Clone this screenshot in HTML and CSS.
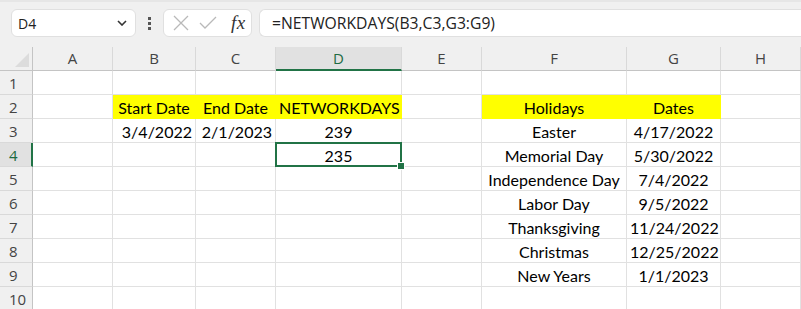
FILE: index.html
```html
<!DOCTYPE html>
<html lang="en">
<head>
    <meta charset="UTF-8">
    <title>NETWORKDAYS - Sheet1</title>
    <link rel="stylesheet" href="styles.css">
</head>
<body>
    <!-- Formula Bar -->
    <div class="toolbar">
        <div class="name-box">
            <span>D4</span>
            <svg class="chevron" width="10" height="6" viewBox="0 0 10 6"><path d="M1 1 L5 5 L9 1" fill="none" stroke="#333" stroke-width="1.6"/></svg>
        </div>
        <div class="dots"><i></i><i></i><i></i></div>
        <div class="fx-box">
            <svg width="16" height="16" viewBox="0 0 16 16"><path d="M1 1 L15 15 M15 1 L1 15" stroke="#b9b9b9" stroke-width="1.3"/></svg>
            <svg width="18" height="14" viewBox="0 0 18 14"><path d="M1 7 L6 12 L17 1" fill="none" stroke="#b9b9b9" stroke-width="1.3"/></svg>
            <span class="fx">fx</span>
        </div>
        <div class="formula">=NETWORKDAYS(B3,C3,G3:G9)</div>
    </div>

    <!-- Sheet Grid -->
    <div class="sheet">
        <div class="corner"></div>
        <div class="col-head">A</div>
        <div class="col-head">B</div>
        <div class="col-head">C</div>
        <div class="col-head active">D</div>
        <div class="col-head">E</div>
        <div class="col-head">F</div>
        <div class="col-head">G</div>
        <div class="col-head">H</div>

        <div class="row-head">1</div>
        <div class="cell"></div><div class="cell"></div><div class="cell"></div><div class="cell"></div><div class="cell"></div><div class="cell"></div><div class="cell"></div><div class="cell"></div>

        <div class="row-head">2</div>
        <div class="cell"></div>
        <div class="cell fill center">Start Date</div>
        <div class="cell fill center">End Date</div>
        <div class="cell fill center">NETWORKDAYS</div>
        <div class="cell"></div>
        <div class="cell fill center">Holidays</div>
        <div class="cell fill center">Dates</div>
        <div class="cell"></div>

        <div class="row-head">3</div>
        <div class="cell"></div>
        <div class="cell right">3/4/2022</div>
        <div class="cell right">2/1/2023</div>
        <div class="cell center">239</div>
        <div class="cell"></div>
        <div class="cell center">Easter</div>
        <div class="cell center">4/17/2022</div>
        <div class="cell"></div>

        <div class="row-head active">4</div>
        <div class="cell"></div>
        <div class="cell"></div>
        <div class="cell"></div>
        <div class="cell center selected">235<span class="handle"></span></div>
        <div class="cell"></div>
        <div class="cell center">Memorial Day</div>
        <div class="cell center">5/30/2022</div>
        <div class="cell"></div>

        <div class="row-head">5</div>
        <div class="cell"></div><div class="cell"></div><div class="cell"></div><div class="cell"></div><div class="cell"></div>
        <div class="cell center">Independence Day</div>
        <div class="cell center">7/4/2022</div>
        <div class="cell"></div>

        <div class="row-head">6</div>
        <div class="cell"></div><div class="cell"></div><div class="cell"></div><div class="cell"></div><div class="cell"></div>
        <div class="cell center">Labor Day</div>
        <div class="cell center">9/5/2022</div>
        <div class="cell"></div>

        <div class="row-head">7</div>
        <div class="cell"></div><div class="cell"></div><div class="cell"></div><div class="cell"></div><div class="cell"></div>
        <div class="cell center">Thanksgiving</div>
        <div class="cell center">11/24/2022</div>
        <div class="cell"></div>

        <div class="row-head">8</div>
        <div class="cell"></div><div class="cell"></div><div class="cell"></div><div class="cell"></div><div class="cell"></div>
        <div class="cell center">Christmas</div>
        <div class="cell center">12/25/2022</div>
        <div class="cell"></div>

        <div class="row-head">9</div>
        <div class="cell"></div><div class="cell"></div><div class="cell"></div><div class="cell"></div><div class="cell"></div>
        <div class="cell center">New Years</div>
        <div class="cell center">1/1/2023</div>
        <div class="cell"></div>

        <div class="row-head">10</div>
        <div class="cell"></div><div class="cell"></div><div class="cell"></div><div class="cell"></div><div class="cell"></div><div class="cell"></div><div class="cell"></div><div class="cell"></div>
    </div>
</body>
</html>
```
FILE: styles.css
```css
/* Reset */
* {
    margin: 0;
    padding: 0;
    box-sizing: border-box;
}

body {
    width: 801px;
    height: 309px;
    overflow: hidden;
    background-color: #fff;
    font-family: "Open Sans", "Noto Sans", sans-serif;
    color: #222;
}

/* Formula Bar */
.toolbar {
    height: 47px;
    background-color: #f0f0f0;
    border-top: 2px solid #e6e6e6;
    display: flex;
    align-items: center;
    padding-left: 11px;
    padding-bottom: 3px;
}

.name-box {
    width: 125px;
    height: 28px;
    background-color: #fff;
    border: 1px solid #e0e0e0;
    border-radius: 6px;
    display: flex;
    align-items: center;
    justify-content: space-between;
    padding: 0 8px 0 6px;
    font-size: 14px;
}

.dots {
    width: 27px;
    display: flex;
    flex-direction: column;
    align-items: center;
    gap: 2px;
}

.dots i {
    width: 3px;
    height: 3px;
    background-color: #555;
}

.fx-box {
    width: 89px;
    height: 28px;
    background-color: #fff;
    border: 1px solid #e0e0e0;
    border-radius: 6px;
    display: flex;
    align-items: center;
    gap: 10px;
    padding-left: 9px;
}

.fx {
    font-family: "Liberation Serif", serif;
    font-style: italic;
    font-size: 19px;
    color: #333;
    margin-left: 4px;
    letter-spacing: 0.5px;
}

.formula {
    flex: 1;
    height: 28px;
    margin-left: 7px;
    background-color: #fff;
    border: 1px solid #e0e0e0;
    border-right: none;
    border-radius: 6px 0 0 6px;
    font-size: 15.7px;
    line-height: 26px;
    padding-left: 12px;
}

/* Sheet */
.sheet {
    display: grid;
    grid-template-columns: 33px 80px 83px 80px 126px 80px 145px 94px 80px;
    grid-auto-rows: 24px;
}

.corner {
    background-color: #f0f0f0;
    border-right: 1px solid #c4c4c4;
    border-bottom: 1px solid #c4c4c4;
    position: relative;
}

.corner::after {
    content: "";
    position: absolute;
    right: 3px;
    bottom: 3px;
    border-left: 14px solid transparent;
    border-bottom: 14px solid #dcdcdc;
}

.col-head {
    background-color: #f0f0f0;
    border-right: 1px solid #d9d9d9;
    border-bottom: 1px solid #c4c4c4;
    text-align: center;
    font-size: 15px;
    line-height: 23px;
    color: #444;
}

.row-head {
    background-color: #f0f0f0;
    border-right: 1px solid #c4c4c4;
    border-bottom: 1px solid #d9d9d9;
    font-size: 15px;
    line-height: 24px;
    padding-left: 9px;
    color: #444;
}

.col-head.active {
    background-color: #e1e1e1;
    border-bottom: 2px solid #217346;
    color: #1d6b42;
}

.row-head.active {
    background-color: #e1e1e1;
    border-right: 2px solid #217346;
    color: #1d6b42;
}

.cell {
    border-right: 1px solid #e1e1e1;
    border-bottom: 1px solid #e1e1e1;
    font-family: "Lato", "Liberation Sans", sans-serif;
    font-size: 16px;
    line-height: 25px;
    padding: 0 3px;
    white-space: nowrap;
    color: #000;
}

.cell.fill {
    background-color: #ffff00;
    border-color: #ffff00;
}

.cell.center {
    text-align: center;
}

.cell.right {
    text-align: right;
}

/* Active cell */
.cell.selected {
    position: relative;
}

.cell.selected::before {
    content: "";
    position: absolute;
    left: -1px;
    top: -1px;
    right: -1px;
    bottom: -1px;
    border: 2px solid #217346;
}

.handle {
    position: absolute;
    right: -4px;
    bottom: -4px;
    width: 6px;
    height: 6px;
    background-color: #217346;
    border: 1px solid #fff;
    box-sizing: content-box;
}
```
